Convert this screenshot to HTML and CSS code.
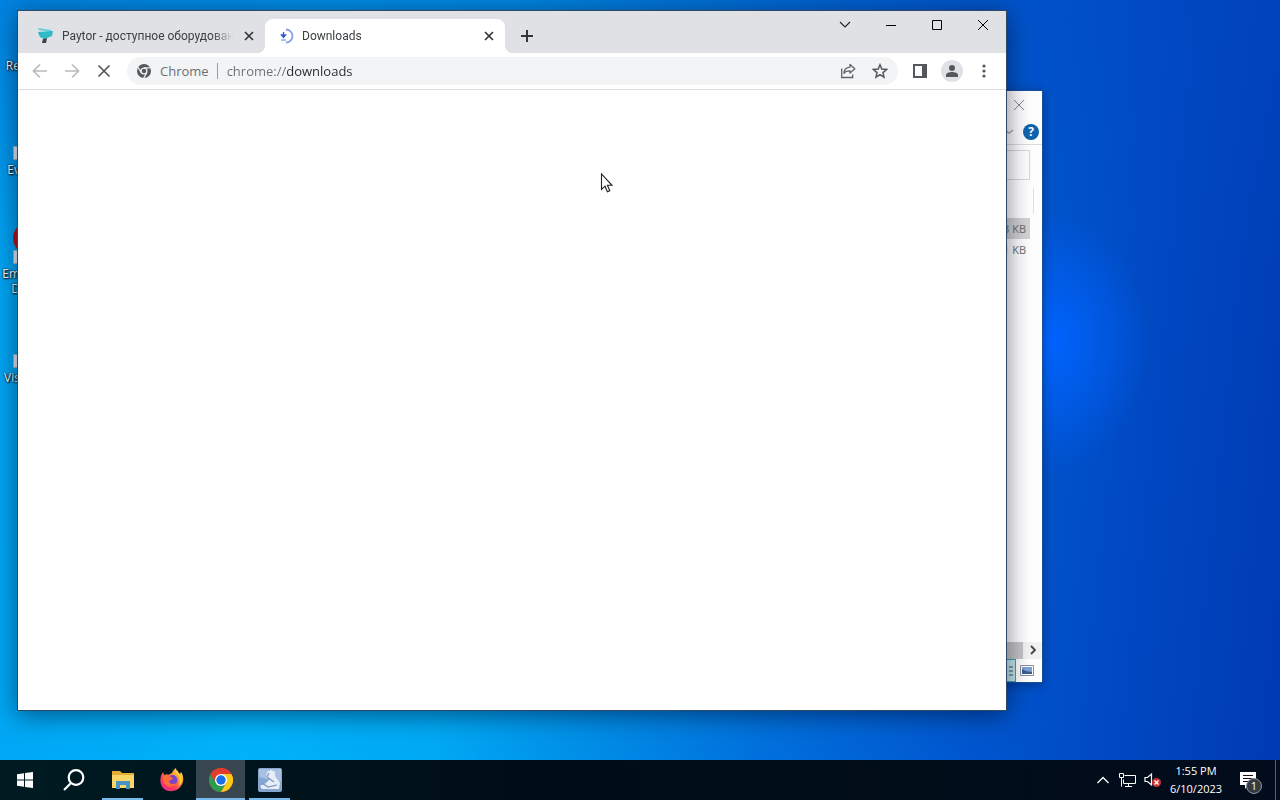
FILE: index.html
```html
<!DOCTYPE html>
<html lang="en">
<head>
<meta charset="utf-8">
<title>Desktop</title>
<link rel="stylesheet" href="styles.css">
</head>
<body>
<div class="screen">
  <main class="desktop">
    <ul class="shortcuts">
      <li class="shortcut"><span class="shortcut-icon"></span><span>Re</span></li>
      <li class="shortcut"><span class="shortcut-icon linked"></span><span>Ev</span></li>
      <li class="shortcut"><span class="shortcut-icon linked ball"></span><span>Em</span><span>D</span></li>
      <li class="shortcut"><span class="shortcut-icon linked sliver"></span><span>Vis</span></li>
    </ul>

    <section class="window explorer" aria-label="File Explorer">
      <div class="explorer-title">
        <button class="icon-btn" aria-label="Close"><svg width="12" height="12" viewBox="0 0 12 12"><path d="M1 1l10 10M11 1L1 11" fill="none" stroke="#888"/></svg></button>
      </div>
      <div class="explorer-ribbon">
        <button class="icon-btn" aria-label="Expand ribbon"><svg width="12" height="8" viewBox="0 0 12 8"><path d="M2 2l4 3 4-3" fill="none" stroke="#aaa" stroke-width="1.5"/></svg></button>
        <button class="help" aria-label="Help">?</button>
      </div>
      <div class="explorer-address"><input class="search-box" type="text" aria-label="Search"></div>
      <div class="explorer-head"></div>
      <table class="files">
        <tr class="selected"><td>3 KB</td></tr>
        <tr><td>1 KB</td></tr>
      </table>
      <div class="scrollbar"><span class="thumb"></span><button class="icon-btn scroll-right" aria-label="Scroll right"><svg width="8" height="10" viewBox="0 0 8 10"><path d="M2 1l4 4-4 4" fill="none" stroke="#444" stroke-width="1.8"/></svg></button></div>
      <div class="explorer-status">
        <button class="view active" aria-label="Details"><svg width="12" height="12" viewBox="0 0 12 12"><path d="M1 2h4M7 2h4M1 6h4M7 6h4M1 10h4M7 10h4" stroke="#456" fill="none"/></svg></button>
        <button class="view" aria-label="Large icons"><svg width="14" height="12" viewBox="0 0 14 12"><path d="M.5 .5h13v10H.5z" fill="#fff" stroke="#8a8f99"/><path d="M2 2h10v7H2z" fill="#7da2dc"/><path d="M2 4l4 2 6 1v2H2z" fill="#3b5f92"/></svg></button>
      </div>
    </section>

    <section class="window chrome" aria-label="Chrome">
      <div class="tabstrip">
        <div class="tab">
          <svg class="favicon" width="16" height="16" viewBox="0 0 16 16"><path d="M0 0l13 2v2L1 2z" fill="#5fd0d9"/><path d="M0 4l15-1-1 5-8 3-4-2-1-2z" fill="#31b9c6"/><path d="M5 11l4-1-1 5H4z" fill="#394047"/></svg>
          <span class="tab-title">Paytor - доступное оборудован</span>
          <button class="icon-btn tab-close" aria-label="Close tab"><svg width="10" height="10" viewBox="0 0 10 10"><path d="M1 1l8 8M9 1L1 9" fill="none" stroke="#333639" stroke-width="1.7"/></svg></button>
        </div>
        <div class="tab current">
          <svg class="favicon" width="16" height="16" viewBox="0 0 16 16"><path d="M8 1.500a6.500 6.500 0 0 1 0 13" fill="none" stroke="#8d9fe0" stroke-width="1.800"/><path d="M5.500 4v4M3.500 7h4l-2 2.500z" fill="#3057cc" stroke="#3057cc" stroke-width="1.300"/><path d="M3 12h5" stroke="#7094f0" stroke-width="1.200"/></svg>
          <span class="tab-title">Downloads</span>
          <button class="icon-btn tab-close" aria-label="Close tab"><svg width="10" height="10" viewBox="0 0 10 10"><path d="M1 1l8 8M9 1L1 9" fill="none" stroke="#333639" stroke-width="1.7"/></svg></button>
        </div>
        <button class="icon-btn new-tab" aria-label="New tab"><svg width="12" height="12" viewBox="0 0 12 12"><path d="M6 0v12M0 6h12" stroke="#333639" stroke-width="2"/></svg></button>
        <div class="window-controls">
          <button class="icon-btn" aria-label="Search tabs"><svg width="12" height="12" viewBox="0 0 12 12"><path d="M1 3l5 5 5-5" fill="none" stroke="#222" stroke-width="1.1"/></svg></button>
          <button class="icon-btn" aria-label="Minimize"><svg width="12" height="12" viewBox="0 0 12 12"><path d="M1 6.500h10" stroke="#000"/></svg></button>
          <button class="icon-btn" aria-label="Maximize"><svg width="12" height="12" viewBox="0 0 12 12"><path d="M1.500 1.500h9v9h-9z" fill="none" stroke="#000"/></svg></button>
          <button class="icon-btn" aria-label="Close"><svg width="12" height="12" viewBox="0 0 12 12"><path d="M1 1l10 10M11 1L1 11" fill="none" stroke="#000"/></svg></button>
        </div>
      </div>
      <div class="toolbar">
        <button class="icon-btn" aria-label="Back"><svg width="16" height="16" viewBox="0 0 16 16"><path d="M15 8H2M8 1.500L1.500 8 8 14.500" fill="none" stroke="#b9bbbe" stroke-width="1.700"/></svg></button>
        <button class="icon-btn" aria-label="Forward"><svg width="16" height="16" viewBox="0 0 16 16"><path d="M1 8h13M8 1.500L14.500 8 8 14.500" fill="none" stroke="#b9bbbe" stroke-width="1.700"/></svg></button>
        <button class="icon-btn" aria-label="Stop"><svg width="16" height="16" viewBox="0 0 16 16"><path d="M2.500 2.500l11 11M13.500 2.500l-11 11" fill="none" stroke="#54575b" stroke-width="1.700"/></svg></button>
        <div class="omnibox">
          <svg class="site-icon" width="14" height="14" viewBox="0 0 14 14"><circle cx="7" cy="7" r="7" fill="#54575b"/><circle cx="7" cy="7" r="2.900" fill="#54575b" stroke="#f3f4f5" stroke-width="1.300"/><path d="M7 3.800h6.200M4.200 8.600L1.100 3.200M9.800 8.600l-3.100 5.400" stroke="#f3f4f5" stroke-width="1.200"/></svg>
          <label class="site-name" for="url">Chrome</label>
          <input class="url" id="url" type="text" value="chrome://downloads" spellcheck="false">
          <button class="icon-btn" aria-label="Share"><svg width="16" height="16" viewBox="0 0 16 16"><path d="M1.700 5.500v9h11v-3" fill="none" stroke="#5f6368" stroke-width="1.300"/><path d="M10 1.500l4.800 4.300L10 10V7.800c-3 0-5 .8-6 2.700 0-3.600 2-6 6-6.400z" fill="none" stroke="#5f6368" stroke-width="1.300" stroke-linejoin="round"/></svg></button>
          <button class="icon-btn" aria-label="Bookmark"><svg width="16" height="16" viewBox="0 0 16 16"><path d="M8 1.800l1.800 4.300 4.700.4L11 9.600l1 4.600-4-2.500-4 2.500 1-4.600-3.500-3.100 4.700-.4z" fill="none" stroke="#54575b" stroke-width="1.500"/></svg></button>
        </div>
        <button class="icon-btn" aria-label="Side panel"><svg width="16" height="16" viewBox="0 0 16 16"><path d="M1 1h14v14H1zM3 3v10h7V3z" fill="#54575b" fill-rule="evenodd"/></svg></button>
        <button class="icon-btn avatar" aria-label="Profile"><svg width="14" height="14" viewBox="0 0 14 14"><circle cx="7" cy="4" r="3" fill="#54575b"/><path d="M1 13v-2c0-4 12-4 12 0v2z" fill="#54575b"/></svg></button>
        <button class="icon-btn" aria-label="Menu"><svg width="16" height="16" viewBox="0 0 16 16" fill="#54575b"><circle cx="8" cy="3" r="1.600"/><circle cx="8" cy="8" r="1.600"/><circle cx="8" cy="13" r="1.600"/></svg></button>
      </div>
      <div class="page"></div>
    </section>

    <svg class="cursor" width="13" height="20" viewBox="0 0 13 20"><path d="M1.500 1v15.500l3.500-3.300 2.400 5.600 2.400-1-2.400-5.500h4.600z" fill="#fff" stroke="#222" stroke-width="1.100"/></svg>
  </main>

  <footer class="taskbar">
    <button class="task" aria-label="Start"><svg width="16" height="16" viewBox="0 0 16 16" fill="#fff"><path d="M0 2.200l7-1v6.300H0zM8 1.100L16 0v7.500H8zM0 8.500h7v6.300l-7-1zM8 8.500h8V16l-8-1.100z"/></svg></button>
    <button class="task" aria-label="Search"><svg width="22" height="22" viewBox="0 0 22 22" fill="none" stroke="#fff" stroke-width="2.200"><circle cx="13" cy="8.500" r="7.300"/><path d="M8 14l-7 7"/></svg></button>
    <button class="task open" aria-label="File Explorer"><svg width="22" height="18" viewBox="0 0 22 18"><path d="M0 0h8l2 2h12v15H0z" fill="#e5ad35"/><path d="M0 4h22v13H0z" fill="#fbd566"/><path d="M4 18V10h14v8h-4v-4H8v4z" fill="#4794c3"/></svg></button>
    <button class="task" aria-label="Firefox"><svg width="24" height="24" viewBox="0 0 24 24"><defs><linearGradient id="fox" x1="1" y1="0" x2=".2" y2="1"><stop offset="0" stop-color="#fff052"/><stop offset=".4" stop-color="#ff982e"/><stop offset=".7" stop-color="#ff4058"/><stop offset="1" stop-color="#e62889"/></linearGradient></defs><path d="M3 4l1 3 3-1 1 1 4-2c1-2 2-4 4-5 0 3 2 4 4 6l1-2c3 4 3 10 0 14-4 6-13 7-18 2C-1 15 0 8 3 4z" fill="url(#fox)"/><circle cx="12.500" cy="12" r="5" fill="#7846c8"/><path d="M3 8c3-1 6-1 8 1l2 1c-1 2-3 2-4 3 0 3 4 4 7 2-2 4-7 5-10 2-3-2-4-5-3-9z" fill="#ff6a3a"/><path d="M15 4c5 4 6 9 3 14 4-2 5-7 2-11l-3-5z" fill="#ffcf3f"/></svg></button>
    <button class="task open focused" aria-label="Chrome"><svg width="24" height="24" viewBox="0 0 24 24"><circle cx="12" cy="12" r="12" fill="#e33b2e"/><path d="M1.600 6A12 12 0 0 0 12 24l5.200-9H6.800z" fill="#2a9d4e"/><path d="M22.400 6A12 12 0 0 1 12 24l5.200-9L12 6z" fill="#fbc916"/><path d="M1.600 6A12 12 0 0 1 22.400 6H12v6H5z" fill="#e33b2e"/><circle cx="12" cy="12" r="6" fill="#fff"/><circle cx="12" cy="12" r="4.700" fill="#1a6fe8"/></svg></button>
    <button class="task open" aria-label="Setup"><svg width="24" height="24" viewBox="0 0 24 24"><rect width="24" height="24" rx="2" fill="#86a6d2"/><path d="M1 1h22v13L1 9z" fill="#a9c0e2"/><path d="M9 4l4-2 4 2v4l5 7-1 6H4l-2-3 6-3 4-4-4-1z" fill="#e7eef8"/><path d="M4 15l6 4 9-2M11 5l-2 4 7 5" fill="none" stroke="#7896c2" stroke-width="1.200"/></svg></button>

    <div class="tray">
      <button class="icon-btn" aria-label="Show hidden icons"><svg width="14" height="14" viewBox="0 0 14 14"><path d="M1.500 10L7 4.500l5.500 5.500" fill="none" stroke="#fff" stroke-width="1.300"/></svg></button>
      <button class="icon-btn" aria-label="Network"><svg width="17" height="14" viewBox="0 0 17 14" fill="none" stroke="#fff"><path d="M5.500 2.500h11v8h-12v-4M9.500 10.500v3M6 13.500h7M.5 .5h4v4h-4zM2.500 4.500v9"/></svg></button>
      <button class="icon-btn" aria-label="Volume muted"><svg width="18" height="16" viewBox="0 0 18 16"><path d="M1 5.500h2.500L7.500 2v11L3.500 9.500H1z" fill="none" stroke="#fff" stroke-width="1.200"/><circle cx="12.500" cy="10.500" r="4.500" fill="#cf3038"/><path d="M10.500 8.500l4 4M14.500 8.500l-4 4" stroke="#fff" stroke-width="1.300"/></svg></button>
      <button class="clock"><time>1:55 PM</time><time>6/10/2023</time></button>
      <button class="icon-btn notices" aria-label="Notifications"><svg width="17" height="17" viewBox="0 0 17 17"><path d="M0 0h16v13H8l-3 4v-4H0z" fill="#fff"/><path d="M3 3.500h10M3 6.500h10M3 9.500h7" stroke="#07101c" stroke-width="1.200"/></svg><span class="badge">1</span></button>
      <button class="show-desktop" aria-label="Show desktop"></button>
    </div>
  </footer>
</div>
</body>
</html>
```
FILE: styles.css
```css
* { box-sizing: border-box; }

body {
  margin: 0;
  font-family: "Open Sans", "Noto Sans", sans-serif;
  font-size: 12px;
  line-height: 16px;
  color: #3c4043;
}

button, input { font: inherit; color: inherit; border: 0; padding: 0; margin: 0; background: none; }

svg { display: block; flex: none; }

.screen { height: 100vh; display: flex; flex-direction: column; overflow: hidden; }

.desktop {
  position: relative;
  flex: 1;
  overflow: hidden;
  background:
    radial-gradient(ellipse 100px 130px at 82% 45%, #0064ff 0%, rgba(0, 98, 250, .7) 35%, rgba(0, 90, 230, 0) 100%),
    linear-gradient(96deg, #00a4f4 0%, #00b2fa 24%, #00a8f4 38%, #0090e8 48%, #0070dc 62%, #0058d0 76%, #0048c2 88%, #003ab2 100%);
}

.desktop::before {
  content: "";
  position: absolute;
  inset: 0;
  background: linear-gradient(180deg, rgba(0, 70, 190, .35), rgba(0, 80, 200, 0) 35%);
}

.shortcuts {
  position: relative;
  list-style: none;
  margin: 0;
  padding: 10px 0 0;
  width: 20px;
  display: grid;
  grid-auto-rows: 104px;
}

.shortcut {
  display: flex;
  flex-direction: column;
  align-items: flex-end;
  font-size: 12px;
  line-height: 15px;
  color: #fff;
  text-shadow: 1px 1px 2px #000, 0 0 2px #000;
}

.shortcut-icon { position: relative; width: 20px; height: 48px; overflow: hidden; flex: none; }

.linked::after { content: ""; position: absolute; left: 13px; top: 32px; width: 12px; height: 12px; background: #e4edf5; border: 1px solid #9fb4c8; }

.ball::before { content: ""; position: absolute; left: 13px; top: 4px; width: 32px; height: 32px; border-radius: 50%; background: #b8141c; }

.sliver::before { content: ""; position: absolute; left: 17px; top: 8px; width: 4px; height: 20px; background: #b0558c; }

.window { position: absolute; background: #fff; display: flex; flex-direction: column; }

.icon-btn { display: flex; align-items: center; justify-content: center; flex: none; min-width: 16px; height: 16px; }

.explorer {
  left: 60px;
  right: 237px;
  top: 90px;
  bottom: 77px;
  border: 1px solid #16509c;
  box-shadow: 0 2px 10px rgba(0, 0, 30, .35);
  color: #6d6d6d;
}

.explorer-title { display: flex; justify-content: flex-end; align-items: center; height: 28px; padding-right: 15px; }
.explorer-ribbon { display: flex; justify-content: flex-end; align-items: center; gap: 6px; height: 26px; padding: 0 3px; border-bottom: 1px solid #dcdcdc; }
.help { width: 16px; height: 16px; border-radius: 50%; background: #0f63ad; color: #fff; font-weight: 700; line-height: 16px; }
.explorer-address { display: flex; justify-content: flex-end; padding: 5px 12px 8px; }
.search-box { width: 200px; height: 30px; border: 1px solid #d9d9d9; }
.explorer-head { height: 26px; margin-right: 8px; border-right: 1px solid #e2e2e2; }

.files { width: 200px; margin: 4px 12px 0 auto; border-collapse: collapse; text-align: right; font-size: 11px; }
.files td { height: 21px; padding: 0 4px; }
.selected { background: #d4d4d4; }

.scrollbar { display: flex; height: 17px; margin-top: auto; background: #f3f3f3; }
.thumb { flex: 1; background: #c6c6c6; }
.scroll-right { width: 19px; }
.explorer-status { display: flex; justify-content: flex-end; gap: 3px; height: 23px; padding-right: 7px; }
.view { display: flex; align-items: center; justify-content: center; width: 16px; }
.view.active { background: #c4e9ef; border: 1px solid #3aa4b4; }

.chrome {
  left: 17px;
  right: 273px;
  top: 10px;
  bottom: 49px;
  border: 1px solid #2c4a68;
  box-shadow: 0 4px 24px rgba(0, 0, 20, .5);
}

.tabstrip { display: flex; height: 42px; padding: 8px 0 0 7px; background: #dfe1e5; }

.tab { position: relative; display: flex; align-items: center; width: 240px; padding: 0 8px 0 13px; gap: 8px; font-family: Roboto, "Open Sans", sans-serif; }
.current { background: #fff; border-radius: 8px 8px 0 0; }
.current::before, .current::after { content: ""; position: absolute; bottom: 0; width: 8px; height: 8px; }
.current::before { left: -8px; background: radial-gradient(circle at 0 0, #dfe1e5 8px, #fff 8px); }
.current::after { right: -8px; background: radial-gradient(circle at 100% 0, #dfe1e5 8px, #fff 8px); }

.tab-title {
  flex: 1;
  overflow: hidden;
  white-space: nowrap;
  -webkit-mask-image: linear-gradient(90deg, #000 88%, transparent);
  mask-image: linear-gradient(90deg, #000 88%, transparent);
}

.new-tab { width: 28px; height: 34px; margin-left: 8px; }
.window-controls { display: flex; margin: -8px 0 0 auto; }
.window-controls .icon-btn { width: 46px; height: 28px; }

.toolbar { display: flex; align-items: center; gap: 16px; height: 37px; padding: 0 14px; border-bottom: 1px solid #d9dbdd; }
.omnibox { flex: 1; display: flex; align-items: center; height: 28px; margin: 0 -2px 0 -1px; padding: 0 10px; border-radius: 14px; background: #f3f4f5; font-size: 13px; color: #6b6f74; }
.omnibox .icon-btn { margin-left: 16px; }
.site-name { margin-left: 9px; padding-right: 8px; border-right: 1px solid #9a9da1; }
.url {
  flex: 1;
  min-width: 0;
  height: 20px;
  margin-left: 9px;
  color: transparent;
  background: linear-gradient(90deg, #6b6f74 60px, #26282b 60px);
  -webkit-background-clip: text;
  background-clip: text;
}
.avatar { width: 22px; height: 22px; margin: 0 -3px; border-radius: 50%; background: #dfe1e7; }
.page { flex: 1; }

.cursor { position: absolute; left: 46.875%; top: 173px; }

.taskbar { display: flex; height: 40px; background: linear-gradient(90deg, #001b22, #000d16 40%, #020c1c); color: #fff; }
.task { position: relative; display: flex; align-items: center; justify-content: center; width: 49px; }
.open::after { content: ""; position: absolute; left: 4px; right: 4px; bottom: 0; height: 2px; background: #76b9ed; }
.focused { background: #38474f; }
.focused::after { left: 0; right: 0; }

.tray { display: flex; align-items: center; gap: 8px; margin-left: auto; }
.clock { display: flex; flex-direction: column; align-items: center; width: 52px; font-size: 11px; line-height: 18px; }
.notices { position: relative; width: 20px; height: 20px; margin: 0 9px 0 8px; }
.badge { position: absolute; left: 8px; top: 8px; width: 16px; height: 16px; border: 1px solid #8c939a; border-radius: 50%; background: #343b43; font-size: 11px; line-height: 14px; text-align: center; }
.show-desktop { align-self: stretch; width: 5px; border-left: 1px solid #56606b; }
```
